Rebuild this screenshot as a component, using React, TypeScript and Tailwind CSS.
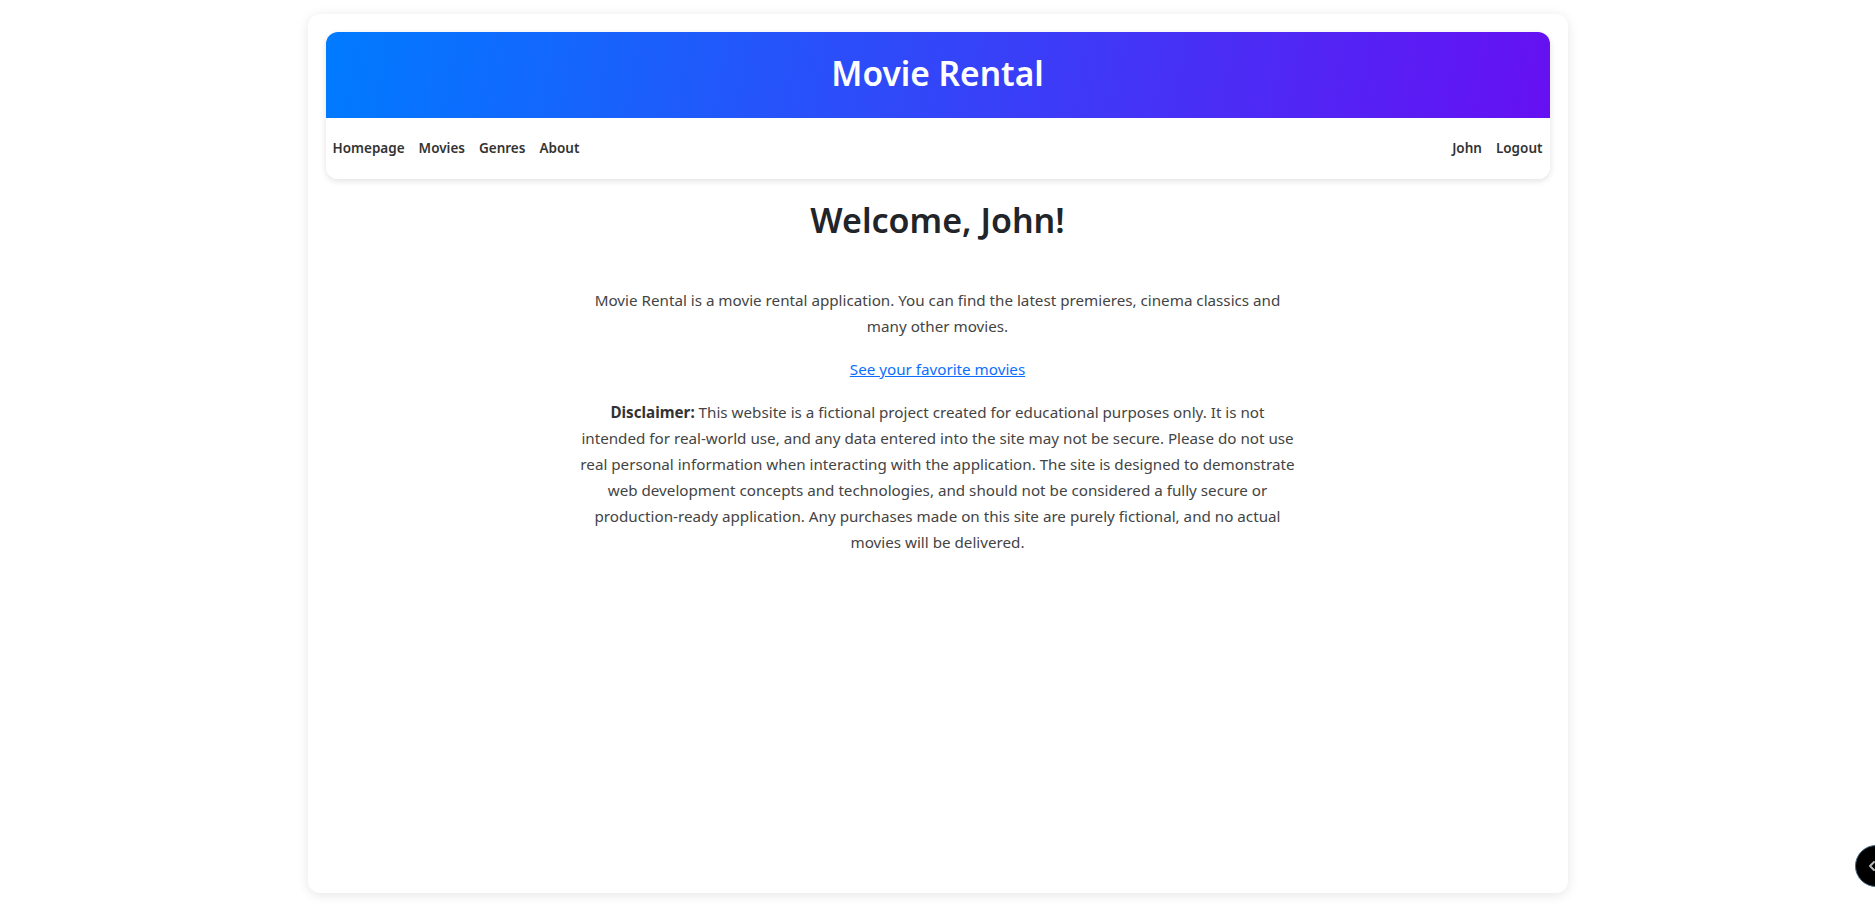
import { ChevronLeft } from "lucide-react";

const navLinks = ["Homepage", "Movies", "Genres", "About"];

export default function App() {
  return (
    <div
      className="min-h-screen bg-white pt-[14px] text-[#212529]"
      style={{ fontFamily: '"Noto Sans", "Open Sans", sans-serif' }}
    >
      <div className="mx-auto flex h-[879px] w-[1260px] flex-col rounded-xl bg-white p-[18px] shadow-[0_2px_12px_rgba(0,0,0,0.1)]">
        {/* Header + nav */}
        <div className="overflow-hidden rounded-xl shadow-[0_2px_6px_rgba(0,0,0,0.12)]">
          <div className="flex h-[86px] items-center justify-center bg-[linear-gradient(100deg,#007bff,#6610f2)] pb-[3px]">
            <h1 className="text-[33.5px] font-semibold text-white">Movie Rental</h1>
          </div>
          <nav className="flex h-[61px] items-center justify-between bg-white px-[7px] text-[13.5px] font-semibold text-[#333]">
            <div className="flex gap-[14px]">
              {navLinks.map((link) => (
                <a key={link} href="#">
                  {link}
                </a>
              ))}
            </div>
            <div className="flex gap-[14px]">
              <a href="#">John</a>
              <a href="#">Logout</a>
            </div>
          </nav>
        </div>

        {/* Content */}
        <main className="flex flex-col items-center pt-[19px] text-center">
          <h2 className="text-[34px] leading-[44px] font-semibold text-[#212529]">Welcome, John!</h2>
          <div className="mt-[46px] w-[780px] text-[15.2px] leading-[25.6px] text-[#444]">
            <p>
              Movie Rental is a movie rental application. You can find the latest premieres, cinema
              classics and
              <br />
              many other movies.
            </p>
            <p className="mt-[18px]">
              <a href="#" className="text-[#0d6efd] underline">
                See your favorite movies
              </a>
            </p>
            <p className="mt-[16px] leading-[26px]">
              <strong className="font-bold text-[#333]">Disclaimer:</strong> This website is a
              fictional project created for educational purposes only. It is not
              <br />
              intended for real-world use, and any data entered into the site may not be secure. Please
              do not use
              <br />
              real personal information when interacting with the application. The site is designed to
              demonstrate
              <br />
              web development concepts and technologies, and should not be considered a fully secure or
              <br />
              production-ready application. Any purchases made on this site are purely fictional, and no
              actual
              <br />
              movies will be delivered.
            </p>
          </div>
        </main>
      </div>

      {/* Floating toggle */}
      <button className="fixed right-[-22px] bottom-[30px] flex h-[42px] w-[42px] items-center justify-start rounded-full border border-[#4a6a80] bg-black pl-[8px]">
        <ChevronLeft className="h-[16px] w-[16px] text-[#bbb]" strokeWidth={3} />
      </button>
    </div>
  );
}
